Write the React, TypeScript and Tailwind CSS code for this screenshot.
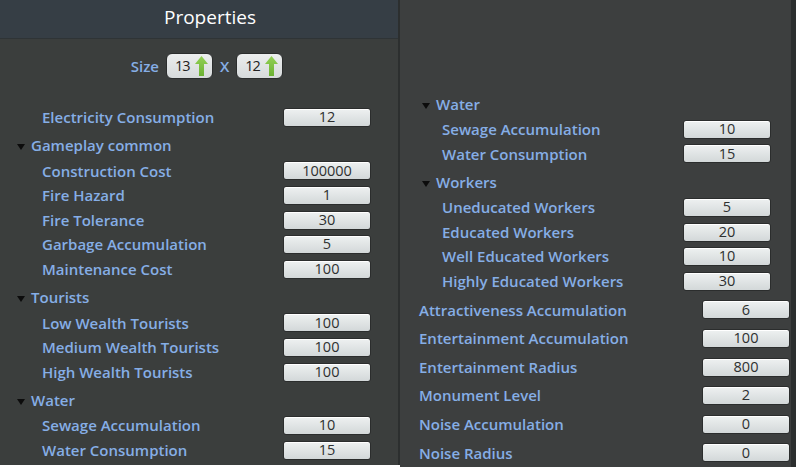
const font = { fontFamily: '"Open Sans", "Liberation Sans", sans-serif' };

type Item = { label: string; value: string };
type Group = { title: string; items: Item[] };

function ValueBox({ value }: { value: string }) {
  return (
    <div className="flex h-[19px] w-[88px] shrink-0 items-center justify-center rounded-[3px] border border-[#2b2d2d] bg-gradient-to-b from-[#eef1f1] to-[#d3d8d9] text-[14.5px] leading-none text-[#2e3030] shadow-[inset_0_1px_0_#ffffff]">
      {value}
    </div>
  );
}

function Triangle() {
  return (
    <svg width="8" height="6" viewBox="0 0 8 6" className="mt-[3px]">
      <path d="M0 0 L8 0 L4 6 Z" fill="#0c0c0c" />
    </svg>
  );
}

function GroupBlock({ group, indent }: { group: Group; indent: string }) {
  return (
    <div>
      <div className={`flex h-[29px] items-center gap-[6px] pt-[3px] ${indent}`}>
        <Triangle />
        <span className="text-[15px] font-semibold text-[#86aee6]">{group.title}</span>
      </div>
      {group.items.map((it) => (
        <div key={it.label} className="flex h-[24.6px] items-center pl-[42px]">
          <span className="w-[241px] text-[15px] font-semibold text-[#86aee6]">{it.label}</span>
          <ValueBox value={it.value} />
        </div>
      ))}
    </div>
  );
}

function UpArrow() {
  return (
    <svg width="13" height="20" viewBox="0 0 13 20" className="shrink-0">
      <defs>
        <linearGradient id="ga" x1="0" y1="0" x2="0" y2="1">
          <stop offset="0" stopColor="#93d155" />
          <stop offset="1" stopColor="#6bb133" />
        </linearGradient>
      </defs>
      <path d="M6.5 0 L13 8 L9 8 L9 20 L4 20 L4 8 L0 8 Z" fill="url(#ga)" />
    </svg>
  );
}

function SizeBox({ value }: { value: string }) {
  return (
    <div className="flex h-[26px] w-[47px] shrink-0 items-center gap-[5px] rounded-[6px] border border-[#2b2d2d] bg-gradient-to-b from-[#eceeee] to-[#d6dadb] pl-[8px] text-[14.5px] tracking-[-1px] text-[#222]">
      <span>{value}</span>
      <UpArrow />
    </div>
  );
}

const leftGroups: Group[] = [
  {
    title: "Gameplay common",
    items: [
      { label: "Construction Cost", value: "100000" },
      { label: "Fire Hazard", value: "1" },
      { label: "Fire Tolerance", value: "30" },
      { label: "Garbage Accumulation", value: "5" },
      { label: "Maintenance Cost", value: "100" },
    ],
  },
  {
    title: "Tourists",
    items: [
      { label: "Low Wealth Tourists", value: "100" },
      { label: "Medium Wealth Tourists", value: "100" },
      { label: "High Wealth Tourists", value: "100" },
    ],
  },
  {
    title: "Water",
    items: [
      { label: "Sewage Accumulation", value: "10" },
      { label: "Water Consumption", value: "15" },
    ],
  },
];

const rightGroups: Group[] = [
  {
    title: "Water",
    items: [
      { label: "Sewage Accumulation", value: "10" },
      { label: "Water Consumption", value: "15" },
    ],
  },
  {
    title: "Workers",
    items: [
      { label: "Uneducated Workers", value: "5" },
      { label: "Educated Workers", value: "20" },
      { label: "Well Educated Workers", value: "10" },
      { label: "Highly Educated Workers", value: "30" },
    ],
  },
];

const rightItems: Item[] = [
  { label: "Attractiveness Accumulation", value: "6" },
  { label: "Entertainment Accumulation", value: "100" },
  { label: "Entertainment Radius", value: "800" },
  { label: "Monument Level", value: "2" },
  { label: "Noise Accumulation", value: "0" },
  { label: "Noise Radius", value: "0" },
];

export default function App() {
  return (
    <div className="flex h-[473px] w-[800px] items-start overflow-hidden bg-white" style={font}>
      <div className="h-[465px] w-[400px] border-r-2 border-[#2c2f2f] bg-[#3b3e3d]">
        <div className="flex h-[39px] items-center justify-center border-b border-[#2f3436] bg-[#363e45] pl-[22px] pb-[4px] text-[19px] text-white">
          Properties
        </div>
        <div className="flex items-center justify-center gap-[7px] pt-[14px] pl-[16px]">
          <span className="text-[15px] font-semibold text-[#86aee6]">Size</span>
          <SizeBox value="13" />
          <span className="text-[15px] font-semibold text-[#86aee6]">X</span>
          <SizeBox value="12" />
        </div>
        <div className="mt-[26px] flex h-[24.6px] items-center pl-[42px]">
          <span className="w-[241px] text-[15px] font-semibold text-[#86aee6]">Electricity Consumption</span>
          <ValueBox value="12" />
        </div>
        {leftGroups.map((g) => (
          <GroupBlock key={g.title} group={g} indent="pl-[17px]" />
        ))}
      </div>
      <div className="h-[467px] w-[396px] border-r-[5px] border-[#2c2f2f] bg-[#3d3f3f] pt-[88px]">
        {rightGroups.map((g) => (
          <GroupBlock key={g.title} group={g} indent="pl-[22px]" />
        ))}
        <div className="pt-[2px]">
          {rightItems.map((it) => (
            <div key={it.label} className="flex h-[28.6px] items-center pl-[19px]">
              <span className="w-[283px] text-[15px] font-semibold text-[#86aee6]">{it.label}</span>
              <ValueBox value={it.value} />
            </div>
          ))}
        </div>
      </div>
    </div>
  );
}
